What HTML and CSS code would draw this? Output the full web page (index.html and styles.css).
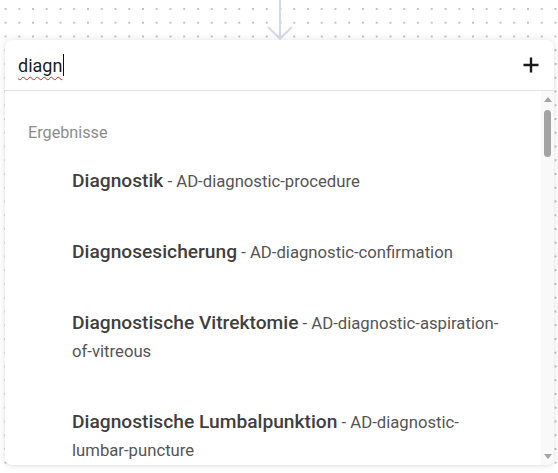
FILE: index.html
```html
<!DOCTYPE html>
<html lang="de">
<head>
<meta charset="utf-8">
<title>Suche</title>
<link rel="stylesheet" href="styles.css">
</head>
<body>
<div class="canvas">
  <div class="connector">
    <svg class="arrow" width="28" height="40" viewBox="0 0 28 40">
      <path d="M14 0 V38 M2 27 L14 38.5 L26 27" fill="none" stroke="#d3dde8" stroke-width="2.2"/>
    </svg>
  </div>
  <div class="card">
    <div class="search">
      <span class="query"><span class="typed">diagn</span><span class="caret"></span></span>
      <svg class="plus" width="16" height="16" viewBox="0 0 16 16">
        <path d="M8 0.5 V15.5 M0.5 8 H15.5" stroke="#1b1b1b" stroke-width="2.4" fill="none"/>
      </svg>
    </div>
    <div class="results">
      <div class="list">
        <div class="group">Ergebnisse</div>
        <div class="item"><span class="name">Diagnostik</span> - AD-diagnostic-procedure</div>
        <div class="item"><span class="name">Diagnosesicherung</span> - AD-diagnostic-confirmation</div>
        <div class="item"><span class="name">Diagnostische Vitrektomie</span> - AD-diagnostic-aspiration-of-vitreous</div>
        <div class="item"><span class="name">Diagnostische Lumbalpunktion</span> - AD-diagnostic-lumbar-puncture</div>
      </div>
      <div class="scrollbar">
        <span class="sb-up"></span>
        <span class="sb-thumb"></span>
        <span class="sb-space"></span>
        <span class="sb-down"></span>
      </div>
    </div>
  </div>
</div>
</body>
</html>
```

FILE: styles.css
```css
html, body {
  margin: 0;
  padding: 0;
}
body {
  width: 558px;
  height: 473px;
  overflow: hidden;
  background-color: #ffffff;
  background-image: radial-gradient(circle, #c4c4c4 0.9px, transparent 1.3px);
  background-size: 13.75px 13.75px;
  background-position: -1.4px 2.1px;
  font-family: Roboto, "Liberation Sans", sans-serif;
}
.canvas {
  display: flex;
  flex-direction: column;
}
.connector {
  height: 40px;
  display: flex;
}
.arrow {
  display: block;
  margin-left: 266px;
}
.card {
  margin-left: 5px;
  width: 549px;
  height: 425px;
  background: #ffffff;
  border-radius: 7px;
  box-shadow: 0 0 9px rgba(0, 0, 0, 0.10), 0 1px 3px rgba(0, 0, 0, 0.06);
  overflow: hidden;
  display: flex;
  flex-direction: column;
}
.search {
  height: 50px;
  flex: none;
  border-bottom: 1px solid #e3e3e3;
  display: flex;
  align-items: center;
  justify-content: space-between;
  padding: 0 15px 0 13px;
}
.query {
  display: flex;
  align-items: center;
  font-size: 18px;
  color: #1c1c1c;
}
.typed {
  text-decoration: underline wavy #e02020;
  text-decoration-thickness: 1px;
  text-underline-offset: 4px;
  text-decoration-skip-ink: none;
}
.caret {
  display: inline-block;
  width: 1px;
  height: 22px;
  background: #111;
  margin-left: 1px;
}
.plus {
  display: block;
}
.results {
  flex: 1;
  display: flex;
  min-height: 0;
}
.list {
  flex: 1;
  overflow: hidden;
}
.group {
  padding: 32px 0 0 23px;
  line-height: 20px;
  font-size: 16.2px;
  color: #8c8c8c;
  margin-bottom: 3px;
}
.item {
  padding: 21px 35px 21px 67px;
  line-height: 28px;
  font-size: 16.7px;
  color: #555555;
}
.name {
  font-size: 19.2px;
  line-height: 28px;
  font-weight: 500;
  color: #3f3f3f;
}
.scrollbar {
  width: 13px;
  flex: none;
  background: #f9f9f9;
  display: flex;
  flex-direction: column;
  align-items: center;
}
.sb-up {
  margin-top: 6px;
  width: 0;
  height: 0;
  border-left: 4px solid transparent;
  border-right: 4px solid transparent;
  border-bottom: 5px solid #a3a3a3;
}
.sb-thumb {
  margin-top: 8px;
  width: 7px;
  height: 47px;
  border-radius: 4px;
  background: #a3a3a3;
}
.sb-space {
  flex: 1;
}
.sb-down {
  margin-bottom: 6px;
  width: 0;
  height: 0;
  border-left: 4px solid transparent;
  border-right: 4px solid transparent;
  border-top: 5px solid #a3a3a3;
}
```
